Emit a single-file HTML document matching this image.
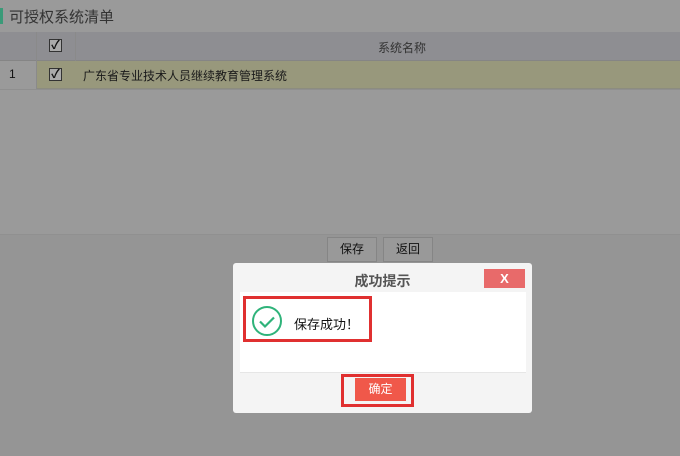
<!DOCTYPE html><html><head><meta charset="utf-8"><style>
*{margin:0;padding:0;box-sizing:border-box}
body{width:680px;height:456px;background:#9a9a9a;position:relative;overflow:hidden;font-family:"Liberation Sans","Noto Sans CJK SC",sans-serif;font-size:12px;color:#111}
.a{position:absolute}
</style></head><body>
<div class="a" style="left:0;top:8px;width:3px;height:16px;background:#3a9a78"></div>
<div class="a" style="left:9px;top:6px;font-size:15px;color:#333">可授权系统清单</div>
<div class="a" style="left:0;top:32px;width:680px;height:29px;background:#8e8e92;border-bottom:1px solid #858585"></div>
<div class="a" style="left:36px;top:32px;width:1px;height:58px;background:#8a8a8a"></div>
<div class="a" style="left:75px;top:32px;width:1px;height:58px;background:#8a8a8a"></div>
<div class="a" style="left:378px;top:39px;color:#333">系统名称</div>
<div class="a" style="left:37px;top:61px;width:643px;height:28px;background:#98987c;border-bottom:1px solid #8c8c80"></div>
<div class="a" style="left:0;top:89px;width:680px;height:1px;background:#8f8f8f"></div>
<div class="a" style="left:9px;top:67px">1</div>
<div class="a" style="left:49px;top:39px;width:13px;height:13px;border:1px solid #333;background:#aaa;font-size:12px;line-height:11px;text-align:center;font-weight:bold">✓</div>
<div class="a" style="left:49px;top:68px;width:13px;height:13px;border:1px solid #333;background:#aaa;font-size:12px;line-height:11px;text-align:center;font-weight:bold">✓</div>
<div class="a" style="left:83px;top:67px;color:#1a1a1a">广东省专业技术人员继续教育管理系统</div>
<div class="a" style="left:0;top:234px;width:680px;height:222px;background:#959595;border-top:1px solid #909090"></div>
<div class="a" style="left:327px;top:237px;width:50px;height:25px;border:1px solid #858585;background:#999;text-align:center;line-height:23px">保存</div>
<div class="a" style="left:383px;top:237px;width:50px;height:25px;border:1px solid #858585;background:#999;text-align:center;line-height:23px">返回</div>
<div class="a" style="left:233px;top:263px;width:299px;height:150px;background:#f4f4f4;border-radius:3px"></div>
<div class="a" style="left:233px;top:271px;width:299px;text-align:center;font-size:14px;color:#555;font-weight:bold">成功提示</div>
<div class="a" style="left:484px;top:269px;width:41px;height:19px;background:#e86a6a;color:#fff;text-align:center;line-height:19px;font-size:13px;font-weight:bold">X</div>
<div class="a" style="left:240px;top:292px;width:286px;height:81px;background:#fff;border-bottom:1px solid #e6e6e6"></div>
<div class="a" style="left:243px;top:296px;width:129px;height:46px;border:3px solid #e03030"></div>
<svg class="a" style="left:251px;top:305px" width="32" height="32" viewBox="0 0 32 32"><circle cx="16" cy="16" r="14" fill="none" stroke="#2fb37a" stroke-width="2"/><path d="M9 16.5l5 5 9-9" fill="none" stroke="#2fb37a" stroke-width="2.2"/></svg>
<div class="a" style="left:294px;top:314px;font-size:13px">保存成功！</div>
<div class="a" style="left:341px;top:374px;width:73px;height:33px;border:3px solid #e03030"></div>
<div class="a" style="left:355px;top:378px;width:51px;height:23px;background:#f0584a;color:#fff;text-align:center;line-height:23px">确定</div>
</body></html>
